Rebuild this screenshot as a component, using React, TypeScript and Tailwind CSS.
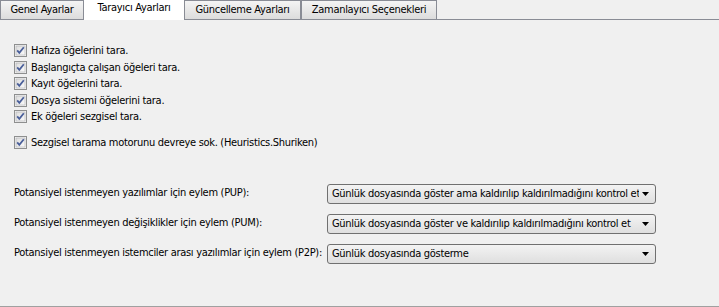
const tabs = [
  { label: "Genel Ayarlar", w: "w-[84px]" },
  { label: "Tarayıcı Ayarları", w: "w-[100px]", active: true },
  { label: "Güncelleme Ayarları", w: "w-[117px]" },
  { label: "Zamanlayıcı Seçenekleri", w: "w-[136px]" },
]

const checks = [
  "Hafıza öğelerini tara.",
  "Başlangıçta çalışan öğeleri tara.",
  "Kayıt öğelerini tara.",
  "Dosya sistemi öğelerini tara.",
  "Ek öğeleri sezgisel tara.",
]

const actions = [
  {
    label: "Potansiyel istenmeyen yazılımlar için eylem (PUP):",
    value: "Günlük dosyasında göster ama kaldırılıp kaldırılmadığını kontrol etme",
  },
  {
    label: "Potansiyel istenmeyen değişiklikler için eylem (PUM):",
    value: "Günlük dosyasında göster ve kaldırılıp kaldırılmadığını kontrol et",
  },
  {
    label: "Potansiyel istenmeyen istemciler arası yazılımlar için eylem (P2P):",
    value: "Günlük dosyasında gösterme",
  },
]

function CheckBox() {
  return (
    <svg width="13" height="13" viewBox="0 0 13 13" className="shrink-0">
      <defs>
        <linearGradient id="cbg" x1="0" y1="0" x2="1" y2="1">
          <stop offset="0" stopColor="#dcdcdc" />
          <stop offset="1" stopColor="#fbfbfb" />
        </linearGradient>
      </defs>
      <rect x="0.5" y="0.5" width="12" height="12" fill="#f4f4f4" stroke="#8e8f8f" />
      <rect x="2" y="2" width="9" height="9" fill="url(#cbg)" stroke="#aeb0b3" strokeWidth="0.6" />
      <path d="M3.2 6.4 L5.3 8.8 L9.8 3.2" fill="none" stroke="#4a5f9a" strokeWidth="1.8" />
    </svg>
  )
}

function Check({ text }: { text: string }) {
  return (
    <div className="h-[16.5px] flex items-start gap-[4px]">
      <CheckBox />
      <span className="leading-[13px]">{text}</span>
    </div>
  )
}

function Combo({ value }: { value: string }) {
  return (
    <div className="w-[329px] h-[20px] flex items-center rounded-[3px] border border-[#707070] bg-gradient-to-b from-[#f3f3f3] to-[#dfdfdf] pl-[4px] pr-[5px]">
      <span className="w-[307px] overflow-hidden whitespace-nowrap leading-[18px]">{value}</span>
      <svg width="8" height="4" viewBox="0 0 8 4" className="ml-auto">
        <path d="M0 0 H7 L3.5 4 Z" fill="#000" />
      </svg>
    </div>
  )
}

export default function App() {
  return (
    <div className="w-[719px] h-[307px] bg-[#f0f0f0] flex flex-col text-[11px] tracking-[-0.3px] text-black font-['DejaVu_Sans_Condensed','DejaVu_Sans',sans-serif]">
      {/* Tabs */}
      <div className="h-[20px] flex">
        {tabs.map((t) =>
          t.active ? (
            <div key={t.label} className={`${t.w} h-[20px] bg-white flex items-center justify-center pb-[3px]`}>
              {t.label}
            </div>
          ) : (
            <div
              key={t.label}
              className={`${t.w} h-[20px] border border-[#898c95] bg-gradient-to-b from-[#f4f4f4] to-[#dcdcdc] flex items-center justify-center pt-[1px]`}
            >
              {t.label}
            </div>
          )
        )}
        <div className="flex-1 border-b border-[#898c95]" />
      </div>

      {/* Panel */}
      <div className="flex-1 border-b border-[#a0a0a0] pl-[14px] pt-[24px]">
        <div className="flex flex-col">
          {checks.map((c) => (
            <Check key={c} text={c} />
          ))}
        </div>
        <div className="mt-[9.5px]">
          <Check text="Sezgisel tarama motorunu devreye sok. (Heuristics.Shuriken)" />
        </div>

        <div className="mt-[30.5px] flex flex-col gap-[9px]">
          {actions.map((a) => (
            <div key={a.label} className="h-[21px] flex items-center">
              <span className="w-[313px] whitespace-nowrap">{a.label}</span>
              <Combo value={a.value} />
            </div>
          ))}
        </div>
      </div>
    </div>
  )
}
